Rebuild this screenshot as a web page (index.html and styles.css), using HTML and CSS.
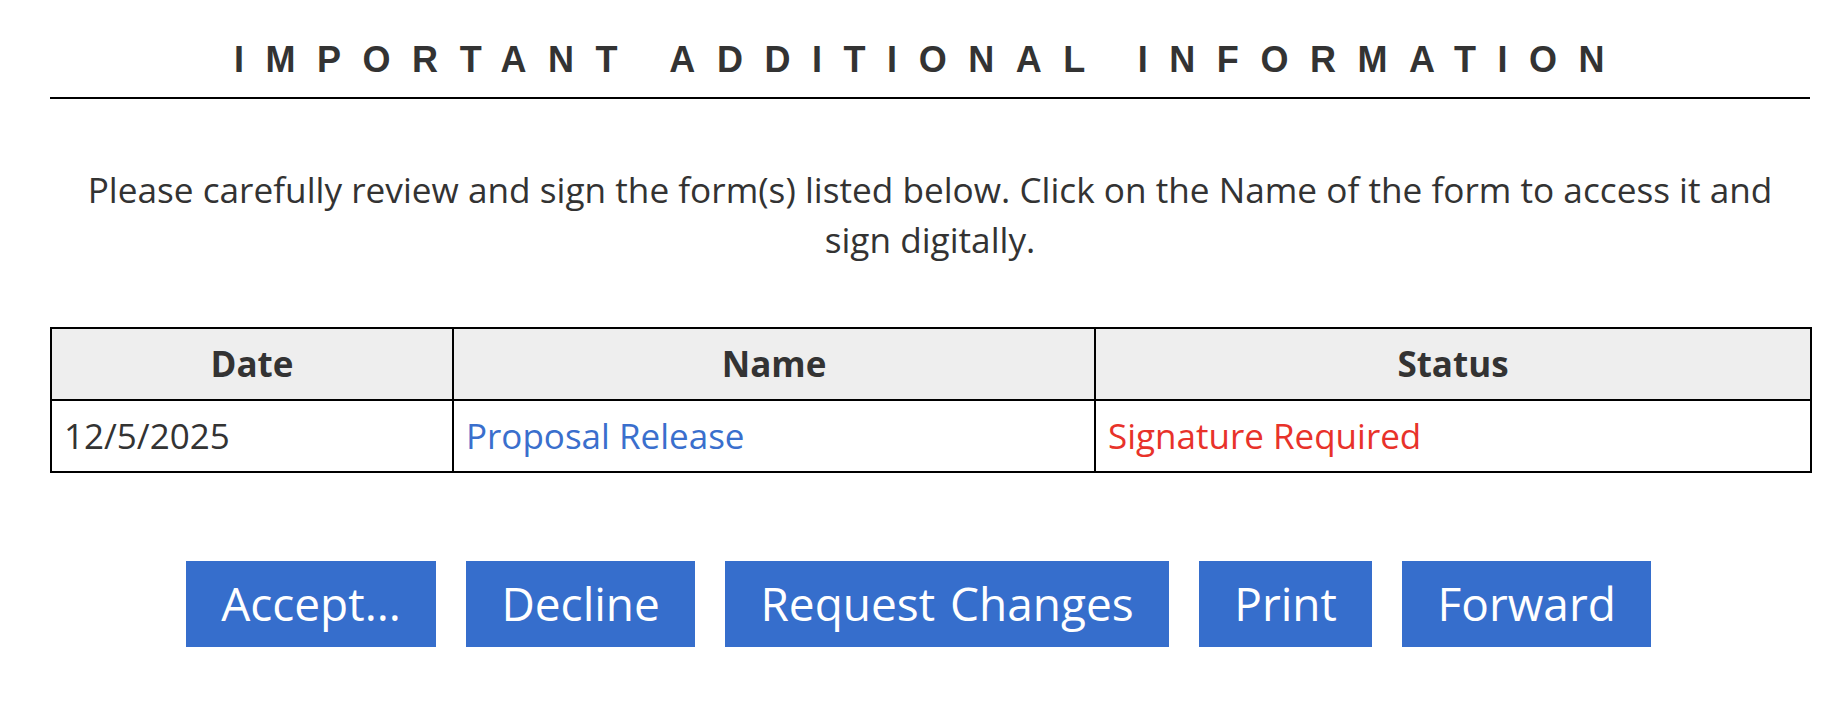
FILE: index.html
```html
<!DOCTYPE html>
<html lang="en">
<head>
<meta charset="utf-8">
<title>Important Additional Information</title>
<link rel="stylesheet" href="styles.css">
</head>
<body>
<div class="page">
  <h1 class="title">IMPORTANT ADDITIONAL INFORMATION</h1>
  <p class="intro">Please carefully review and sign the form(s) listed below. Click on the Name of the form to access it and sign digitally.</p>
  <table class="forms">
    <thead>
      <tr>
        <th class="col-date">Date</th>
        <th class="col-name">Name</th>
        <th class="col-status">Status</th>
      </tr>
    </thead>
    <tbody>
      <tr>
        <td>12/5/2025</td>
        <td><a class="form-link" href="#">Proposal Release</a></td>
        <td class="status-required">Signature Required</td>
      </tr>
    </tbody>
  </table>
  <div class="actions">
    <button class="btn" type="button">Accept...</button>
    <button class="btn" type="button">Decline</button>
    <button class="btn btn-wide" type="button">Request Changes</button>
    <button class="btn" type="button">Print</button>
    <button class="btn" type="button">Forward</button>
  </div>
</div>
</body>
</html>
```

FILE: styles.css
```css
html, body {
  margin: 0;
  padding: 0;
  background: #ffffff;
}

body {
  font-family: "Open Sans", "Noto Sans", sans-serif;
  color: #333333;
}

.page {
  width: 1760px;
  margin-left: 50px;
  padding-top: 40px;
}

.title {
  margin: 0;
  font-family: "Liberation Sans", Arial, sans-serif;
  font-weight: bold;
  font-size: 36px;
  line-height: 40px;
  letter-spacing: 21.55px;
  text-align: center;
  color: #333333;
  padding-bottom: 17px;
  border-bottom: 2px solid #000000;
}

.intro {
  margin: 65px 0 0 0;
  padding: 0 30px;
  font-size: 35.2px;
  line-height: 50px;
  text-align: center;
  color: #333333;
}

.forms {
  margin-top: 63px;
  width: 1760px;
  border-collapse: collapse;
  table-layout: fixed;
  font-size: 35px;
  line-height: 50px;
}

.forms th,
.forms td {
  box-sizing: border-box;
  border: 2px solid #000000;
  padding: 10px 12px 10px 12px;
  text-align: left;
  font-weight: normal;
}

.forms th {
  background: #eeeeee;
  font-weight: bold;
  text-align: center;
}

.col-date { width: 402px; }
.col-name { width: 642px; }
.col-status { width: 716px; }

.form-link {
  color: #3a6fcd;
  text-decoration: none;
}

.status-required {
  color: #e8322a;
}

.actions {
  display: flex;
  justify-content: center;
  gap: 30.5px;
  margin-top: 88px;
  padding-right: 23px;
}

.btn {
  font-family: "Open Sans", "Noto Sans", sans-serif;
  font-size: 46px;
  line-height: 61px;
  padding: 12px 35px 13px 35px;
  border: none;
  border-radius: 0;
  background: #366ecc;
  color: #ffffff;
  cursor: pointer;
}

.btn-wide {
  word-spacing: 3px;
}
```
